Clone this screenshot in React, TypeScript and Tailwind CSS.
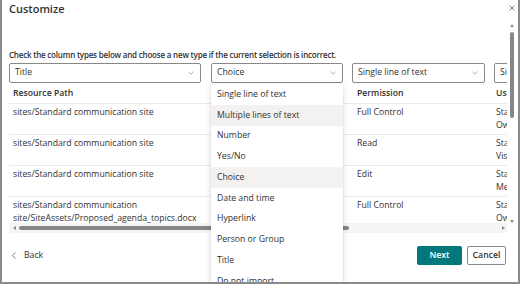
import React from "react";

const rows = [
  {
    path: ["sites/Standard communication site"],
    perm: "Full Control",
    user: ["Standard communication site", "Owners"],
  },
  {
    path: ["sites/Standard communication site"],
    perm: "Read",
    user: ["Standard communication site", "Visitors"],
  },
  {
    path: ["sites/Standard communication site"],
    perm: "Edit",
    user: ["Standard communication site", "Members"],
  },
  {
    path: ["sites/Standard communication", "site/SiteAssets/Proposed_agenda_topics.docx"],
    perm: "Full Control",
    user: ["Standard communication site", "Owners"],
  },
];

const types = [
  "Single line of text",
  "Multiple lines of text",
  "Number",
  "Yes/No",
  "Choice",
  "Date and time",
  "Hyperlink",
  "Person or Group",
  "Title",
  "Do not import",
];

const Chevron = () => (
  <svg width="6" height="4" viewBox="0 0 6 4" className="shrink-0">
    <path d="M0.5 0.8 L3 3.2 L5.5 0.8" fill="none" stroke="#8a8886" strokeWidth="0.7" />
  </svg>
);

const Dropdown = ({ value, className }: { value: string; className: string }) => (
  <div
    className={`flex h-[20px] items-center justify-between overflow-hidden whitespace-nowrap rounded-[2px] border border-[#8a8886] bg-white pl-[5px] pr-[6px] ${className}`}
  >
    <span>{value}</span>
    <Chevron />
  </div>
);

export default function App() {
  return (
    <div className="relative flex h-[284px] w-[520px] flex-col overflow-hidden border-x-2 border-b-2 border-[#8a8a8a] bg-white font-['Open_Sans',sans-serif] text-[8.7px] text-[#323130]">
      {/* title */}
      <div className="h-[48px] pl-[7px] pt-[1px]">
        <h1 className="text-[11px] font-semibold leading-[16px]">Customize</h1>
      </div>
      <svg
        width="6"
        height="6"
        viewBox="0 0 6 6"
        className="absolute left-[507px] top-[5px]"
      >
        <path d="M0.5 0.5 L5.5 5.5 M5.5 0.5 L0.5 5.5" stroke="#605e5c" strokeWidth="0.8" />
      </svg>

      <p className="h-[14px] whitespace-nowrap pl-[7px] text-[8px] font-semibold leading-[14px] tracking-[-0.2px]">
        Check the column types below and choose a new type if the current selection is incorrect.
      </p>

      {/* scrolling table area */}
      <div className="ml-[7px] mt-[1px] w-[498px] overflow-hidden">
        <div className="grid w-[627px] grid-cols-[202px_141px_142px_142px]">
          <Dropdown value="Title" className="w-[192px]" />
          <Dropdown value="Choice" className="w-[132px]" />
          <Dropdown value="Single line of text" className="w-[133px]" />
          <Dropdown value="Single line of text" className="w-[133px]" />
        </div>

        <div className="mt-[1px] grid h-[20px] w-[627px] grid-cols-[202px_141px_142px_142px] items-center border-b border-[#edebe9] font-semibold">
          <div className="pl-[4px]">Resource Path</div>
          <div />
          <div className="pl-[5px]">Permission</div>
          <div className="whitespace-nowrap pl-[2px]">User or group</div>
        </div>

        {rows.map((row, i) => (
          <div
            key={i}
            className={`grid w-[627px] grid-cols-[202px_141px_142px_142px] overflow-hidden pt-[2px] leading-[13px] ${
              i < 3 ? "h-[31px] border-b border-[#edebe9]" : "h-[26px]"
            }`}
          >
            <div className="pl-[4px]">
              {row.path.map((l) => (
                <div key={l} className="whitespace-nowrap">
                  {l}
                </div>
              ))}
            </div>
            <div />
            <div className="pl-[5px]">{row.perm}</div>
            <div className="pl-[2px]">
              {row.user.map((l) => (
                <div key={l} className="whitespace-nowrap">
                  {l}
                </div>
              ))}
            </div>
          </div>
        ))}

        {/* horizontal scrollbar */}
        <div className="flex h-[10px] items-center bg-[#f5f5f5]">
          <svg width="3" height="4" viewBox="0 0 3 4" className="ml-[4px]">
            <path d="M3 0 L0 2 L3 4 Z" fill="#8a8a8a" />
          </svg>
          <div className="ml-[3px] h-[4px] w-[330px] rounded-full bg-[#868686]" />
          <div className="flex-1" />
          <svg width="3" height="4" viewBox="0 0 3 4" className="mr-[2px]">
            <path d="M0 0 L3 2 L0 4 Z" fill="#8a8a8a" />
          </svg>
        </div>
      </div>

      {/* vertical scrollbar */}
      <div className="absolute left-[507px] top-[24px] flex h-[199px] w-[6px] flex-col items-center">
        <svg width="4" height="3" viewBox="0 0 4 3">
          <path d="M0 3 L2 0 L4 3 Z" fill="#8a8a8a" />
        </svg>
        <div className="mt-[5px] h-[86px] w-[4px] rounded-full bg-[#868686]" />
        <div className="flex-1" />
        <svg width="4" height="3" viewBox="0 0 4 3">
          <path d="M0 0 L2 3 L4 0 Z" fill="#8a8a8a" />
        </svg>
      </div>

      {/* footer */}
      <div className="mt-[13px] flex h-[19px] items-center justify-between pl-[10px] pr-[12px]">
        <div className="flex items-center gap-[8px]">
          <svg width="4" height="7" viewBox="0 0 4 7">
            <path d="M3.5 0.5 L0.5 3.5 L3.5 6.5" fill="none" stroke="#605e5c" strokeWidth="0.8" />
          </svg>
          <span>Back</span>
        </div>
        <div className="flex h-full gap-[5px]">
          <button className="h-full w-[45px] rounded-[2px] bg-[#03787c] font-semibold text-white">
            Next
          </button>
          <button className="h-full w-[39px] rounded-[2px] border border-[#8a8886] bg-white font-semibold">
            Cancel
          </button>
        </div>
      </div>

      {/* open dropdown menu */}
      <div className="absolute left-[209px] top-[84px] w-[132px] bg-white shadow-[0_3px_7px_rgba(0,0,0,0.13),0_0.6px_1.8px_rgba(0,0,0,0.11)]">
        {types.map((t) => (
          <div
            key={t}
            className={`flex h-[20.75px] items-center pl-[6px] ${
              t === "Multiple lines of text" || t === "Choice" ? "bg-[#f3f2f1]" : ""
            }`}
          >
            {t}
          </div>
        ))}
      </div>
    </div>
  );
}
